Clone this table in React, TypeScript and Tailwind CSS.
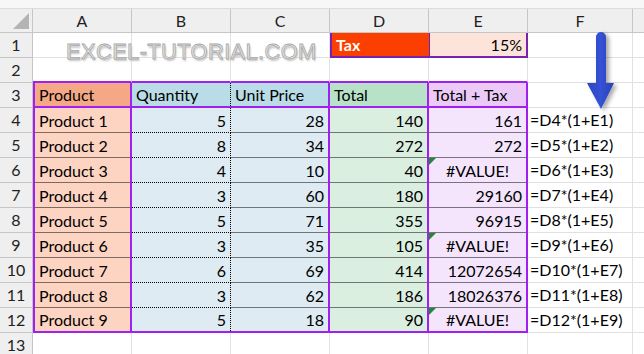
import React from "react";

const P = "border-[#a020f0]";
// dotted row separator drawn as a repeating background along the bottom edge
const HDOT = "bg-[linear-gradient(to_right,#000_50%,transparent_50%)] bg-[length:2px_1px] bg-repeat-x bg-bottom";

type Row = [string, number, number, number, string, string, boolean];

const rows: Row[] = [
  ["Product 1", 5, 28, 140, "161", "=D4*(1+E1)", false],
  ["Product 2", 8, 34, 272, "272", "=D5*(1+E2)", false],
  ["Product 3", 4, 10, 40, "#VALUE!", "=D6*(1+E3)", true],
  ["Product 4", 3, 60, 180, "29160", "=D7*(1+E4)", false],
  ["Product 5", 5, 71, 355, "96915", "=D8*(1+E5)", false],
  ["Product 6", 3, 35, 105, "#VALUE!", "=D9*(1+E6)", true],
  ["Product 7", 6, 69, 414, "12072654", "=D10*(1+E7)", false],
  ["Product 8", 3, 62, 186, "18026376", "=D11*(1+E8)", false],
  ["Product 9", 5, 18, 90, "#VALUE!", "=D12*(1+E9)", true],
];

function RowHead({ n }: { n: number }) {
  return (
    <div className="box-border flex h-[25px] w-[33px] shrink-0 items-center justify-center border-r border-b border-[#c6c6c6] bg-[#efefef] text-[16px] text-[#222]">
      {n}
    </div>
  );
}

function Cell({
  w = "w-[99px]",
  cls = "border-r border-b border-[#e1e1e1]",
  children,
}: {
  w?: string;
  cls?: string;
  children?: React.ReactNode;
}) {
  return (
    <div className={`relative box-border flex h-[25px] shrink-0 items-center px-[4px] ${w} ${cls}`}>
      {children}
    </div>
  );
}

// table cell: outer carries colour and solid purple borders, inner carries dotted lines
function TCell({
  outer,
  inner = "",
  children,
}: {
  outer: string;
  inner?: string;
  children?: React.ReactNode;
}) {
  return (
    <div className={`relative box-border h-[25px] w-[99px] shrink-0 ${outer}`}>
      <div className={`box-border flex h-full items-center px-[4px] ${inner}`}>{children}</div>
    </div>
  );
}

function Triangle() {
  return (
    <svg className="absolute left-0 top-0" width="7" height="7" viewBox="0 0 7 7">
      <polygon points="0,0 7,0 0,7" fill="#1f8a2e" />
    </svg>
  );
}

export default function App() {
  const cols = ["A", "B", "C", "D", "E", "F"];
  return (
    <div className="relative h-[354px] w-[644px] overflow-hidden bg-white font-['Lato','Open_Sans',sans-serif] text-[16px] text-black">
      {/* top strip */}
      <div className="h-[9px] border-b border-[#dcdcdc] bg-[#f7f7f7]" />

      {/* column headers */}
      <div className="flex h-[24px]">
        <div className="relative box-border flex w-[33px] shrink-0 items-end justify-end border-r border-b border-[#c6c6c6] bg-[#efefef] p-[3px]">
          <svg width="16" height="16" viewBox="0 0 16 16">
            <polygon points="16,0 16,16 0,16" fill="#b4b4b4" />
          </svg>
        </div>
        {cols.map((c) => (
          <div
            key={c}
            className={`box-border flex shrink-0 items-center justify-center border-r border-b border-[#c6c6c6] bg-[#efefef] text-[16px] text-[#222] ${
              c === "F" ? "w-[105px]" : "w-[99px]"
            }`}
          >
            {c}
          </div>
        ))}
        <div className="flex-1 border-b border-[#c6c6c6] bg-[#efefef]" />
      </div>

      {/* row 1 */}
      <div className="flex">
        <RowHead n={1} />
        <Cell />
        <Cell />
        <Cell />
        <Cell cls="border-l-2 border-b-2 border-[#7a22b0] bg-[#fb3f00] font-bold text-white">Tax</Cell>
        <Cell cls="justify-end border-r-2 border-b-2 border-l border-[#7a22b0] bg-[#fde4db]">15%</Cell>
        <Cell w="w-[105px]" />
        <div className="flex-1 border-b border-[#e1e1e1]" />
      </div>

      {/* row 2 */}
      <div className="flex">
        <RowHead n={2} />
        <Cell cls={`border-r border-b-2 ${P} border-r-[#e1e1e1]`} />
        <Cell cls={`border-r border-b-2 ${P} border-r-[#e1e1e1]`} />
        <Cell cls={`border-r border-b-2 ${P} border-r-[#e1e1e1]`} />
        <Cell cls={`border-r border-b-2 ${P} border-r-[#e1e1e1]`} />
        <Cell cls={`border-r border-b-2 ${P} border-r-[#e1e1e1]`} />
        <Cell w="w-[105px]" />
        <div className="flex-1 border-b border-[#e1e1e1]" />
      </div>

      {/* row 3 header */}
      <div className="flex">
        <RowHead n={3} />
        <TCell outer={`border-l-2 border-r-2 border-b-2 ${P} bg-[#f5a886]`}>Product</TCell>
        <TCell outer={`border-b-2 ${P} bg-[#b9dce6]`} inner="border-r border-dotted border-black">
          Quantity
        </TCell>
        <TCell outer={`border-r-2 border-b-2 ${P} bg-[#b9dce6]`}>Unit Price</TCell>
        <TCell outer={`border-r-2 border-b-2 ${P} bg-[#b7e2c7]`}>Total</TCell>
        <TCell outer={`border-r-2 border-b-2 ${P} bg-[#eccaf7]`}>Total + Tax</TCell>
        <Cell w="w-[105px]" />
        <div className="flex-1 border-b border-[#e1e1e1]" />
      </div>

      {/* data rows */}
      {rows.map(([name, q, price, total, tax, formula, err], i) => {
        const last = i === rows.length - 1;
        const ob = last ? `border-b-2 ${P}` : "";
        const ib = last ? "" : HDOT;
        return (
          <div key={name} className="flex">
            <RowHead n={i + 4} />
            <TCell outer={`border-x-2 ${P} ${ob} bg-[#fdd4c2]`} inner={ib}>
              {name}
            </TCell>
            <TCell outer={`${ob} bg-[#deebf3]`} inner={`justify-end border-r border-dotted border-black ${ib}`}>
              {q}
            </TCell>
            <TCell outer={`border-r-2 ${P} ${ob} bg-[#deebf3]`} inner={`justify-end ${ib}`}>
              {price}
            </TCell>
            <TCell outer={`border-r-2 ${P} ${ob} bg-[#dbefe0]`} inner={`justify-end ${ib}`}>
              {total}
            </TCell>
            <TCell
              outer={`border-r-2 ${P} ${ob} bg-[#f4e5fd]`}
              inner={`${ib} ${err ? "justify-center" : "justify-end"}`}
            >
              {err && <Triangle />}
              {tax}
            </TCell>
            <Cell w="w-[105px]" cls="border-r border-b border-[#e1e1e1] !px-[2px]">
              {formula}
            </Cell>
            <div className="flex-1 border-b border-[#e1e1e1]" />
          </div>
        );
      })}

      {/* row 13 */}
      <div className="flex">
        <RowHead n={13} />
        <Cell />
        <Cell />
        <Cell />
        <Cell />
        <Cell />
        <Cell w="w-[105px]" />
        <div className="flex-1 border-b border-[#e1e1e1]" />
      </div>

      {/* watermark */}
      <div className="pointer-events-none absolute left-[66px] top-[35px] font-['Liberation_Sans',sans-serif] text-[22px] tracking-[0.3px] text-[#e6e6e6] [-webkit-text-stroke:0.8px_#a8a8a8] [text-shadow:1px_2px_2px_#c0c0c0]">
        EXCEL-TUTORIAL.COM
      </div>

      {/* arrow */}
      <svg className="pointer-events-none absolute left-[582px] top-[29px]" width="44" height="86" viewBox="0 0 44 86">
        <defs>
          <filter id="sh" x="-30%" y="-10%" width="160%" height="130%">
            <feDropShadow dx="3" dy="2" stdDeviation="2" floodColor="#000" floodOpacity="0.35" />
          </filter>
          <linearGradient id="bl" x1="0" x2="1" y1="0" y2="0">
            <stop offset="0" stopColor="#2b45c4" />
            <stop offset="0.5" stopColor="#3552d4" />
            <stop offset="1" stopColor="#2a40bb" />
          </linearGradient>
        </defs>
        <path
          d="M14,8 a5,5 0 0 1 10,0 L24,54 L32,54 L19,80 L5,54 L14,54 Z"
          fill="url(#bl)"
          filter="url(#sh)"
        />
      </svg>
    </div>
  );
}
